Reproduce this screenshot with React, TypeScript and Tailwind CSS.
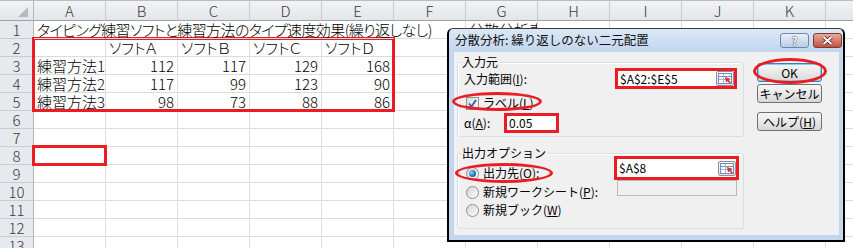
import React from "react";

const cols = ["A", "B", "C", "D", "E", "F", "G", "H", "I", "J", "K", "L"];

type Val = string | number | undefined;

const sheet: Record<number, Val[]> = {
  1: ["タイピング練習ソフトと練習方法のタイプ速度効果(繰り返しなし)", undefined, undefined, undefined, undefined, undefined, "分散分析表"],
  2: [undefined, "ソフトＡ", "ソフトＢ", "ソフトＣ", "ソフトＤ"],
  3: ["練習方法1", 112, 117, 129, 168],
  4: ["練習方法2", 117, 99, 123, 90],
  5: ["練習方法3", 98, 73, 88, 86],
};

function SheetRow({ r }: { r: number }) {
  const vals = sheet[r] ?? [];
  return (
    <div className="flex h-[18px] shrink-0">
      <div className="w-[34px] shrink-0 border-r border-b border-r-[#b1b5ba] border-b-[#c9cdd2] bg-[#e6e9ed] text-center text-[15px] leading-[17px] text-[#3b3b3b]">
        {r}
      </div>
      {cols.map((c, i) => {
        const v = vals[i];
        const hideRight = r === 1 && i < 5;
        return (
          <div
            key={c}
            className={
              "w-[72px] shrink-0 border-b border-r border-[#dadcdd] px-[3px] text-[15px] leading-[17px] whitespace-nowrap " +
              (hideRight ? "border-r-transparent relative z-[1] overflow-visible " : "overflow-hidden ") +
              (r === 1 && i === 0 ? "tracking-[-0.6px] " : "") +
              (typeof v === "number" ? "text-right" : "text-left")
            }
          >
            {v}
          </div>
        );
      })}
    </div>
  );
}

function Sheet() {
  return (
    <div className="flex flex-col font-light [font-feature-settings:'palt']">
      <div className="flex h-[21px] shrink-0 border-t border-[#b9bdc2]">
        <div className="w-[34px] shrink-0 flex items-end justify-end pr-[5px] pb-[3px] border-r border-b border-r-[#b1b5ba] border-b-[#9ea3a9] bg-gradient-to-b from-[#f1f3f5] to-[#e3e6ea]">
          <svg width="10" height="10" viewBox="0 0 10 10">
            <polygon points="10,0 10,10 0,10" fill="#b6babf" />
          </svg>
        </div>
        {cols.map((c) => (
          <div
            key={c}
            className="w-[72px] shrink-0 border-r border-b border-r-[#c6cacf] border-b-[#9ea3a9] bg-gradient-to-b from-[#f1f3f5] to-[#e3e6ea] text-center text-[15px] leading-[19px] text-[#3b3b3b]"
          >
            {c}
          </div>
        ))}
      </div>
      {Array.from({ length: 13 }, (_, i) => i + 1).map((r) => (
        <SheetRow key={r} r={r} />
      ))}
    </div>
  );
}

function RangeIcon() {
  return (
    <div className="w-[18px] h-[15px] border border-[#8d9198] rounded-[2px] bg-gradient-to-b from-[#fafafa] to-[#dfe2e6] flex items-center justify-center">
      <svg width="14" height="11" viewBox="0 0 14 11">
        <rect x="0.5" y="0.5" width="13" height="10" fill="#fff" stroke="#6f8fc4" />
        <line x1="1" y1="3.5" x2="13" y2="3.5" stroke="#6f8fc4" />
        <line x1="1" y1="6.5" x2="8" y2="6.5" stroke="#9fb5da" />
        <line x1="5.5" y1="1" x2="5.5" y2="10" stroke="#9fb5da" />
        <polygon points="7,4 13,6 11,7 13,10 11.5,10.5 9.5,8 8,9.5" fill="#e0302a" />
      </svg>
    </div>
  );
}

function RedField({ value, w, h, icon }: { value: string; w: string; h: string; icon?: boolean }) {
  return (
    <div className={"shrink-0 border-[3px] border-[#ec1c24] bg-white flex items-center " + w + " " + h}>
      <span className="flex-1 pl-[2px] text-[12px] leading-none">{value}</span>
      {icon && <RangeIcon />}
    </div>
  );
}

function Ellipse({ className }: { className: string }) {
  return <div className={"absolute rounded-[50%] border-[3px] border-[#ec1c24] pointer-events-none " + className} />;
}

function Checkbox() {
  return (
    <div className="w-[13px] h-[13px] border border-[#8e8f8f] bg-gradient-to-br from-[#dcdcdc] to-[#fbfbfb] flex items-center justify-center">
      <svg width="9" height="9" viewBox="0 0 9 9">
        <path d="M1 4.5 L3.5 7.5 L8 1" fill="none" stroke="#3b56a8" strokeWidth="1.8" />
      </svg>
    </div>
  );
}

function Radio({ on }: { on?: boolean }) {
  return (
    <div className="w-[13px] h-[13px] rounded-full border border-[#8e8f8f] bg-gradient-to-br from-[#d6d6d6] to-[#fdfdfd] flex items-center justify-center">
      {on && <div className="w-[7px] h-[7px] rounded-full bg-[radial-gradient(circle_at_35%_35%,#8fd3ff,#1b6fb8_60%,#0d3f78)]" />}
    </div>
  );
}

function DlgButton({ children, focus }: { children: React.ReactNode; focus?: boolean }) {
  return (
    <div
      className={
        "h-[19px] w-[65px] rounded-[3px] border flex items-center justify-center text-[12px] bg-gradient-to-b from-[#f6f6f6] via-[#e9e9e9] to-[#d7d7d7] " +
        (focus ? "border-[#3c7fb1] shadow-[inset_0_0_0_1px_#7fd0f0]" : "border-[#707070]")
      }
    >
      {children}
    </div>
  );
}

function Group({ label, className, children }: { label: string; className: string; children: React.ReactNode }) {
  return (
    <div className={"relative rounded-[3px] border border-[#d5dfe5] shadow-[inset_1px_1px_0_#fff] " + className}>
      <span className="absolute -top-[9px] left-[4px] bg-[#f0f0f0] pr-[1px] text-[12px] leading-[16px]">{label}</span>
      {children}
    </div>
  );
}

function Dialog() {
  return (
    <div className="absolute left-[447px] top-[28px] z-10 w-[398px] h-[214px] flex flex-col rounded-t-[6px] border-2 border-t border-black border-t-[#3a3a3a] bg-[#c2d6ee] text-black font-['Noto_Sans_CJK_JP',sans-serif]">
      <div className="h-[23px] shrink-0 flex items-center pl-[6px] pr-[1px] rounded-t-[5px] bg-gradient-to-b from-[#dce8f6] to-[#c2d6ee]">
        <span className="flex-1 text-[12.5px] leading-none text-[#111]">分散分析: 繰り返しのない二元配置</span>
        <div className="w-[29px] h-[15px] mr-[4px] rounded-[3px] border border-[#6d87ad] bg-gradient-to-b from-[#e9f0f8] to-[#b9cde6] flex items-center justify-center text-[12px] font-bold leading-none text-white [text-shadow:0_0_1px_#333,0_0_1px_#333]">
          ?
        </div>
        <div className="w-[29px] h-[15px] rounded-[3px] border border-[#7a3b33] bg-gradient-to-b from-[#e9a99c] to-[#c24f40] flex items-center justify-center">
          <svg width="11" height="9" viewBox="0 0 11 9">
            <path d="M1.5 1 L9.5 8 M9.5 1 L1.5 8" stroke="#4a1a14" strokeWidth="3.4" />
            <path d="M1.5 1 L9.5 8 M9.5 1 L1.5 8" stroke="#fff" strokeWidth="2" />
          </svg>
        </div>
      </div>
      <div className="flex-1 ml-[5px] mr-[4px] mb-[5px] bg-[#f0f0f0] flex pl-[3px] pt-[10px] text-[12px]">
        <div className="w-[287px] flex flex-col">
          <Group label="入力元" className="h-[75px] flex flex-col px-[6px] pt-[5px]">
            <div className="flex items-center justify-between h-[21px]">
              <span>
                入力範囲(<u>I</u>):
              </span>
              <RedField value="$A$2:$E$5" w="w-[122px]" h="h-[21px]" icon />
            </div>
            <div className="mt-[6px] h-[16px] flex items-center">
              <div className="relative flex items-center ml-[2px]">
                <Ellipse className="-left-[14px] -top-[2px] w-[90px] h-[19px]" />
                <Checkbox />
                <span className="ml-[4px]">
                  ラベル(<u>L</u>)
                </span>
              </div>
            </div>
            <div className="mt-[2px] flex items-center">
              <span className="w-[40px]">
                α(<u>A</u>):
              </span>
              <RedField value="0.05" w="w-[55px]" h="h-[20px]" />
            </div>
          </Group>
          <Group label="出力オプション" className="mt-[16px] h-[76px] flex">
            <div className="flex flex-col pl-[8px] pt-[10px]">
              <div className="relative h-[18px] flex items-center">
                <Ellipse className="-left-[11px] -top-[1px] w-[98px] h-[20px]" />
                <Radio on />
                <span className="ml-[4px]">
                  出力先(<u>O</u>):
                </span>
              </div>
              <div className="mt-[1px] h-[18px] flex items-center">
                <Radio />
                <span className="ml-[4px]">
                  新規ワークシート(<u>P</u>):
                </span>
              </div>
              <div className="h-[18px] flex items-center">
                <Radio />
                <span className="ml-[4px]">
                  新規ブック(<u>W</u>)
                </span>
              </div>
            </div>
            <div className="ml-auto mr-[4px] pt-[2px] flex flex-col">
              <RedField value="$A$8" w="w-[125px]" h="h-[24px]" icon />
              <div className="ml-[3px] w-[120px] h-[16px] border border-[#b9b9b9] bg-[#f0f0f0]" />
            </div>
          </Group>
        </div>
        <div className="ml-[13px] w-[65px] pt-[1px] flex flex-col">
          <div className="relative">
            <Ellipse className="-left-[4px] -top-[5px] w-[74px] h-[26px]" />
            <DlgButton focus>OK</DlgButton>
          </div>
          <div className="mt-[2px]">
            <DlgButton>キャンセル</DlgButton>
          </div>
          <div className="mt-[9px]">
            <DlgButton>
              ヘルプ(<u>H</u>)
            </DlgButton>
          </div>
        </div>
      </div>
    </div>
  );
}

export default function App() {
  return (
    <div className="relative w-[853px] h-[248px] overflow-hidden bg-white text-black font-['Noto_Sans_CJK_JP',sans-serif]">
      <Sheet />
      <div className="absolute left-[32px] top-[37px] w-[363px] h-[75px] border-[3px] border-[#ec1c24] pointer-events-none" />
      <div className="absolute left-[32px] top-[145px] w-[75px] h-[21px] border-[3px] border-[#ec1c24] pointer-events-none" />
      <Dialog />
    </div>
  );
}
